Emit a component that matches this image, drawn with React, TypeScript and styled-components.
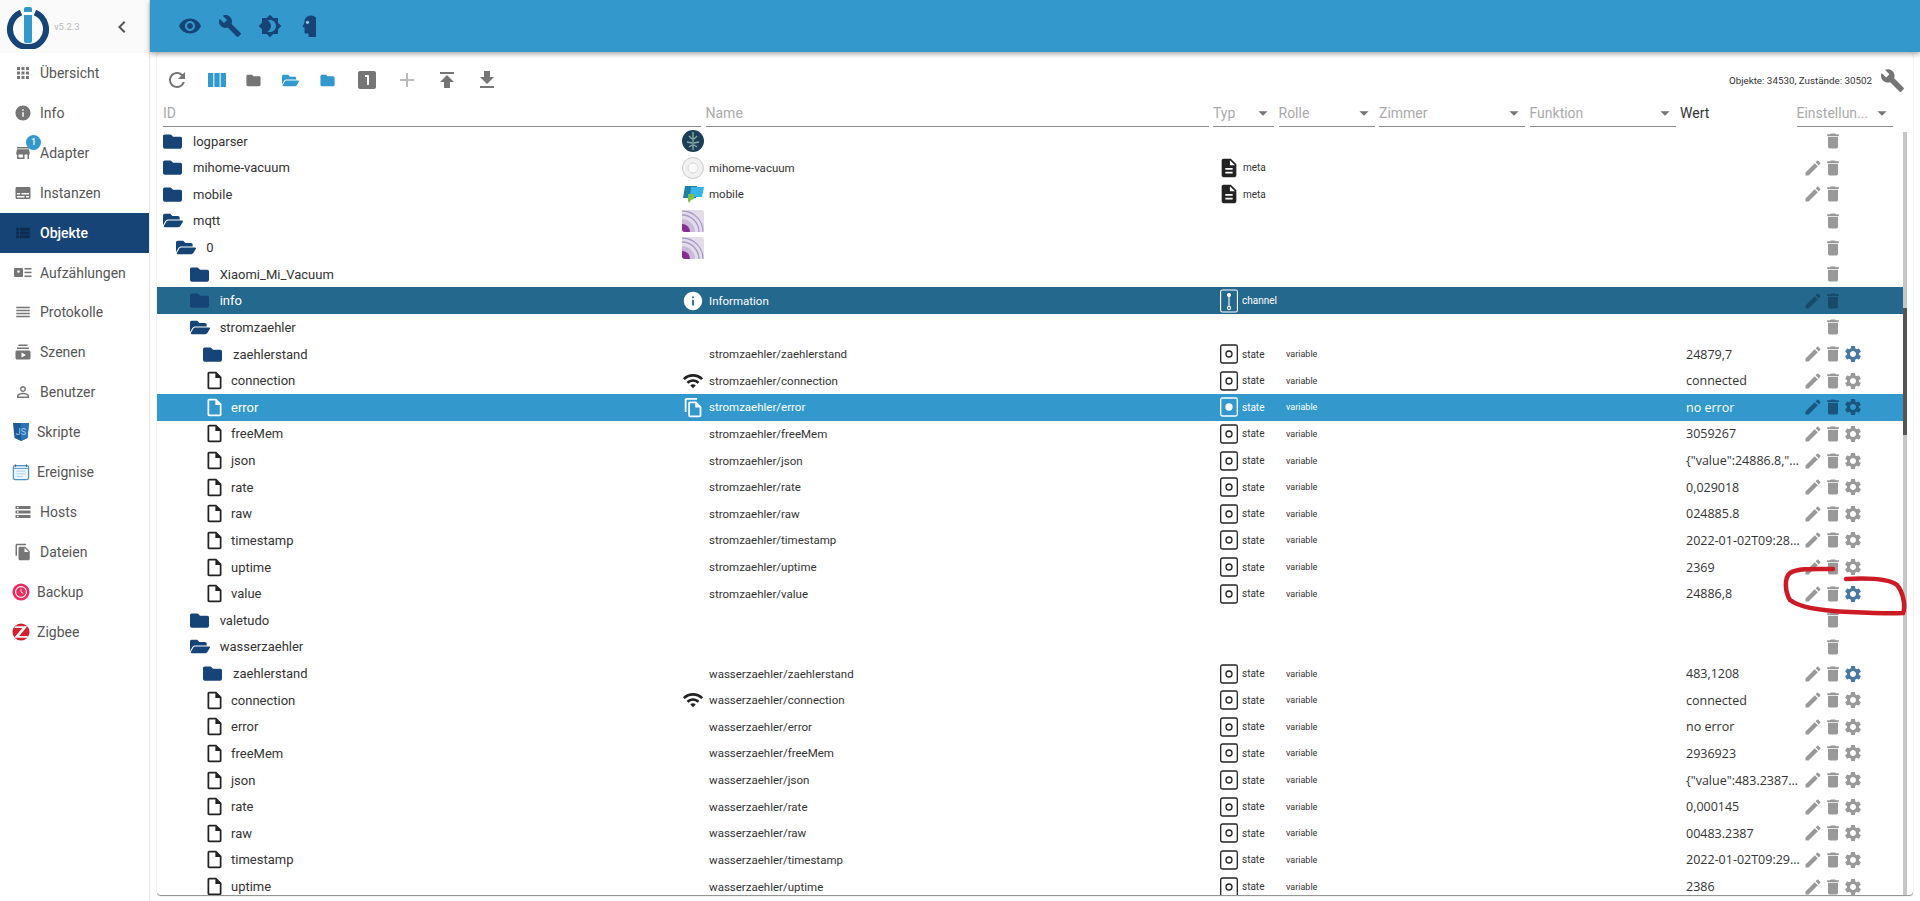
import React from "react";
import styled, { createGlobalStyle } from "styled-components";
import {
  MdApps, MdInfo, MdStore, MdSubtitles, MdViewList, MdReorder, MdSubscriptions, MdPersonOutline,
  MdStorage, MdFileCopy, MdVisibility, MdBuild, MdBrightness4, MdRefresh, MdViewColumn, MdFolder,
  MdLooksOne, MdAdd, MdPublish, MdGetApp, MdChevronLeft, MdArrowDropDown, MdEdit, MdDelete, MdSettings,
  MdDescription, MdWifi, MdOutlineInsertDriveFile, MdOutlineFileCopy,
} from "react-icons/md";
import { FaFolder, FaFolderOpen } from "react-icons/fa";

const Global = createGlobalStyle`
  html, body { margin: 0; padding: 0; height: 100%; overflow: hidden; background: #fff; }
  body { font-family: Roboto, "Liberation Sans", sans-serif; }
`;

const Page = styled.div`display: flex; height: 901px; width: 1920px; overflow: hidden; position: relative;`;
const Side = styled.aside`width: 149px; flex: none; border-right: 1px solid #e4e4e4; background: #fff;`;
const LogoBar = styled.div`height: 53px; display: flex; align-items: center; background: #fafafa; padding-left: 6px; box-sizing: border-box;`;
const Version = styled.span`font-size: 9.5px; color: #bbb; margin-left: 4px; width: 56px;`;
const Collapse = styled.span`color: #555; display: flex; font-size: 24px;`;
const Item = styled.div<{ $on?: boolean; $custom?: boolean }>`
  height: 39.93px; display: flex; align-items: center; position: relative;
  padding-left: ${p => (p.$custom ? 12 : 14)}px;
  background: ${p => (p.$on ? "#164477" : "transparent")};
  color: ${p => (p.$on ? "#fff" : "#555")};
  font-size: 14px; font-weight: ${p => (p.$on ? 500 : 400)};
`;
const ItemIcon = styled.span<{ $on?: boolean; $custom?: boolean }>`
  width: 18px; height: 18px; display: flex; align-items: center; justify-content: center;
  margin-right: ${p => (p.$custom ? 7 : 8)}px; color: ${p => (p.$on ? "#0c2c52" : "#757575")}; font-size: 20px;
`;
const Badge = styled.span`
  position: absolute; left: 26px; top: 2px; width: 15px; height: 15px; border-radius: 50%;
  background: #3399cc; color: #fff; font-size: 9px; font-weight: 500; display: flex; align-items: center; justify-content: center;
`;
const Main = styled.main`flex: 1; min-width: 0; display: flex; flex-direction: column; position: relative;`;
const Top = styled.header`
  height: 52px; flex: none; background: #3399cc; display: flex; align-items: center; padding-left: 28px;
  box-shadow: 0 2px 5px rgba(0,0,0,.35); z-index: 2; color: #164477; gap: 16px;
`;
const TopBtn = styled.span`width: 24px; height: 24px; font-size: 24px; display: flex;`;
const Panel = styled.section`
  flex: 1; min-height: 0; margin: 0 7px 6px 7px; background: #fff; border-radius: 4px;
  box-shadow: 0 1px 1px rgba(0,0,0,.45), 0 0 1px rgba(0,0,0,.14);
  display: flex; flex-direction: column; overflow: hidden;
`;
const Tools = styled.div`height: 48px; flex: none; display: flex; align-items: center; padding: 8px 8px 0 8px; box-sizing: border-box;`;
const Tool = styled.span<{ $c?: string; $ml?: number }>`
  width: 24px; height: 24px; font-size: 24px; display: flex; color: ${p => p.$c || "#757575"}; margin-left: ${p => p.$ml ?? 0}px;
`;
const ToolSmall = styled(Tool)`font-size: 17px; align-items: center; justify-content: center;`;
const Stats = styled.span`margin-left: auto; font-size: 9.8px; color: #333; white-space: nowrap;`;
const StatsWrench = styled.span`font-size: 25px; color: #757575; display: flex; margin-left: 8px;`;
const Filters = styled.div`
  height: 27px; flex: none; display: grid; padding-left: 6px; column-gap: 4.5px; box-sizing: border-box;
  grid-template-columns: 538px 503px 61px 96px 146px 146px 112px 96px;
`;
const Filter = styled.div<{ $plain?: boolean }>`
  display: flex; align-items: center; justify-content: space-between; font-size: 14px; box-sizing: border-box;
  color: ${p => (p.$plain ? "#333" : "#aaa")}; border-bottom: ${p => (p.$plain ? "0" : "1px solid #8c8c8c")};
  padding-bottom: ${p => (p.$plain ? 2 : 0)}px;
  svg { color: #757575; font-size: 22px; flex: none; }
`;
const Body = styled.div`flex: 1; min-height: 0; display: flex; position: relative;`;
const Rows = styled.div`flex: 1; min-width: 0; overflow: hidden; padding-top: 0.7px;`;
const Track = styled.div`width: 4px; flex: none; background: #c6c6c6; margin: 5px 6px 0 0; position: relative;`;
const Thumb = styled.div`position: absolute; left: 0; top: 176px; width: 4px; height: 127px; background: #555;`;
const Row = styled.div<{ $sel?: "hover" | "on" }>`
  height: 26.64px; display: grid; align-items: center; padding-left: 6px;
  grid-template-columns: 519px 531px 73px 400px 119px 1fr; box-sizing: border-box;
  background: ${p => (p.$sel === "on" ? "#3399cc" : p.$sel === "hover" ? "#25688d" : "transparent")};
  color: ${p => (p.$sel ? "#fff" : "#333")};
`;
const IdCell = styled.div<{ $depth: number; $file?: boolean }>`
  display: flex; align-items: center; font-size: 13px; padding-left: ${p => p.$depth * 13.33 + (p.$file ? 3 : 0)}px;
`;
const FolderIcon = styled.span<{ $open?: boolean }>`
  width: 20px; margin-right: 10px; font-size: 20px; color: #164477; display: flex;
  svg { width: ${p => (p.$open ? 21 : 19)}px; height: 19px; }
`;
const FileIcon = styled.span<{ $sel?: boolean }>`
  width: 18px; margin-right: 6px; margin-left: 1px; display: flex; font-size: 19px; color: ${p => (p.$sel ? "#fff" : "#222")};
  svg { margin-left: -3px; width: 21px; height: 21px; }
`;
const NameCell = styled.div`display: flex; align-items: center; font-size: 11.5px;`;
const NameIcon = styled.span`width: 22px; height: 22px; margin-right: 5px; flex: none; display: flex; align-items: center; justify-content: center;`;
const TypeCell = styled.div`display: flex; align-items: center; font-size: 10px; padding-left: 7px; gap: 4px;`;
const RoleCell = styled.div`font-size: 9px;`;
const ValueCell = styled.div`font-size: 12.5px; font-family: "Open Sans", Roboto, sans-serif; white-space: nowrap; overflow: hidden; text-overflow: ellipsis; width: 115px;`;
const Actions = styled.div`display: flex; align-items: center; height: 20px; margin-left: -2.5px;`;
const Act = styled.span<{ $c: string; $hide?: boolean }>`
  display: flex; font-size: 20px; width: 20px; justify-content: center; color: ${p => p.$c}; visibility: ${p => (p.$hide ? "hidden" : "visible")};
`;
const Mark = styled.svg`position: absolute; left: 0; top: 0; pointer-events: none; z-index: 5;`;

const Logo = () => (
  <svg width="44" height="44" viewBox="0 0 44 44" style={{ flex: "none" }}>
    <path d="M15 7.500 A18 18 0 1 0 29 7.500" fill="none" stroke="#164477" strokeWidth="6" />
    <rect x="18" y="2" width="8" height="36" rx="2" fill="#3399cc" />
    <rect x="18" y="7" width="8" height="3" fill="#fff" />
  </svg>
);
const Shield = () => (
  <svg width="18" height="20" viewBox="0 0 18 20"><path d="M1 1h16l-1.500 15L9 19l-6.500-3z" fill="#1d5a96" /><path d="M9 1h8l-1.500 15L9 19z" fill="#2a75b8" /><text x="9" y="13" textAnchor="middle" fontSize="9" fill="#9cc8e8" fontFamily="Roboto">JS</text></svg>
);
const Calendar = () => (
  <svg width="20" height="20" viewBox="0 0 20 20"><rect x="1.500" y="3" width="17" height="15.500" rx="2" fill="#eaf4fb" stroke="#4a90c4" strokeWidth="1.300" /><path d="M1.500 6h17" stroke="#4a90c4" /><path d="M4 1.500v3M16 1.500v3" stroke="#555" /><path d="M5 9h10M5 12h10M5 15h7" stroke="#a9cde6" /></svg>
);
const BackupIc = () => (
  <svg width="20" height="20" viewBox="0 0 20 20"><circle cx="10" cy="10" r="9.500" fill="#ea2b5f" /><circle cx="10" cy="10" r="6" fill="none" stroke="#fff" strokeWidth="1.200" /><path d="M10 6.500V10l2.500 1.500" stroke="#fff" fill="none" /></svg>
);
const ZigbeeIc = () => (
  <svg width="20" height="20" viewBox="0 0 20 20"><circle cx="10" cy="10" r="9.500" fill="#d5202f" /><path d="M3 3.500h14L8 14.500h9.500v2H2.500L11.500 5.500H3z" fill="#fff" /></svg>
);
const EnumIc = () => (
  <svg width="18" height="18" viewBox="0 0 18 18" fill="#757575"><rect x="0" y="4" width="9" height="9" rx="1" /><rect x="10.500" y="4" width="7" height="1.500" /><rect x="10.500" y="7.700" width="7" height="1.500" /><rect x="10.500" y="11.500" width="7" height="1.500" /><circle cx="4.500" cy="7.500" r="1.200" fill="#fff" /></svg>
);
const Head = () => (
  <svg width="24" height="24" viewBox="0 0 24 24" fill="#164477"><path d="M13 1.500c-3.500 0-6.500 2.500-6.500 6 0 1-.2 1.700-.7 2.500L4.600 12.300c-.2.500.1.900.7.900h1.200V18c0 1 .8 1.500 1.500 1.500h2.500v3.500H18V3.500C16.500 2.200 15 1.500 13 1.500z" /><circle cx="9.500" cy="8.300" r="1.600" fill="#8fc7e3" /></svg>
);
const StateIc = ({ on }: { on?: boolean }) => (
  <svg width="18" height="22" viewBox="0 0 18 22" fill="none" stroke={on ? "#fff" : "#222"} strokeWidth="1.300">
    <rect x="0.700" y="2" width="16.600" height="18" rx="1.800" />
    <circle cx="9" cy="11" r="3" fill={on ? "#fff" : "none"} />
  </svg>
);
const ChannelIc = () => (
  <svg width="18" height="24" viewBox="0 0 18 24" fill="none" stroke="#fff" strokeWidth="1.100">
    <rect x="0.600" y="1" width="16.800" height="22" rx="1.800" />
    <circle cx="9" cy="6" r="1.500" fill="#fff" /><path d="M9 7v10" /><circle cx="9" cy="19" r="1.600" />
  </svg>
);
const AdapterIc = ({ kind }: { kind: string }) => {
  if (kind === "log")
    return <svg width="22" height="22" viewBox="0 0 22 22"><circle cx="11" cy="11" r="11" fill="#1c3f57" /><path d="M11 2v18M7 6l3 3M15 6l-3 3M5 12l5 1M17 12l-5 1M7 17l3-2M15 17l-3-2" stroke="#8aa" strokeWidth="1.400" /></svg>;
  if (kind === "vac")
    return <svg width="22" height="22" viewBox="0 0 22 22"><circle cx="11" cy="11" r="10.500" fill="#f1f1f1" stroke="#ccc" /><circle cx="11" cy="11" r="5" fill="#fafafa" stroke="#d8d8d8" /></svg>;
  if (kind === "mob")
    return <svg width="22" height="22" viewBox="0 0 22 22"><path d="M3 3h12l-1 12H1z" fill="#1f7fa8" /><path d="M9 4h13l-2 10H8z" fill="#35b5e5" /><path d="M6 11h6v5l-3 1-2 3-1-2z" fill="#7cc04b" /></svg>;
  return (
    <svg width="22" height="22" viewBox="0 0 22 22"><rect width="22" height="22" rx="3" fill="#e3dcea" />
      <g fill="none" stroke="#a89bc4" strokeWidth="1.300"><path d="M0 5a17 17 0 0 1 17 17" /><path d="M0 1a21 21 0 0 1 21 21" /></g>
      <path d="M0 9a13 13 0 0 1 13 13H3a3 3 0 0 1-3-3z" fill="#cbb9dc" /><path d="M0 14a8 8 0 0 1 8 8H3a3 3 0 0 1-3-3z" fill="#862c8f" /></svg>
  );
};

const nav: [string, React.ReactNode, boolean?][] = [
  ["Übersicht", <MdApps />], ["Info", <MdInfo />], ["Adapter", <MdStore />], ["Instanzen", <MdSubtitles />],
  ["Objekte", <MdViewList />], ["Aufzählungen", <EnumIc />], ["Protokolle", <MdReorder />], ["Szenen", <MdSubscriptions />],
  ["Benutzer", <MdPersonOutline />], ["Skripte", <Shield />, true], ["Ereignise", <Calendar />, true], ["Hosts", <MdStorage />],
  ["Dateien", <MdFileCopy />], ["Backup", <BackupIc />, true], ["Zigbee", <ZigbeeIc />, true],
];

type R = {
  id: string; depth: number; kind: "f" | "o" | "d"; name?: string; icon?: string; type?: string; role?: string;
  val?: string; sel?: "hover" | "on"; pen?: boolean; gear?: "" | "blue";
};
const states = (p: string, vals: string[], gears: boolean[] = []): R[] =>
  ["connection", "error", "freeMem", "json", "rate", "raw", "timestamp", "uptime", "value"].slice(0, vals.length).map((n, i) => ({
    id: n, depth: 3, kind: "d", name: `${p}/${n}`, icon: n === "connection" ? "wifi" : undefined, type: "state", role: "variable",
    val: vals[i], pen: true, gear: gears[i] ? "blue" : "",
  }));
const strom = states("stromzaehler", ["connected", "no error", "3059267", '{"value":24886.8,"unit":"m3"}', "0,029018", "024885.8", "2022-01-02T09:28:11.123", "2369", "24886,8"], [false, true, false, false, false, false, false, false, true]);
strom[1].sel = "on"; strom[1].icon = "copy";
const wasser = states("wasserzaehler", ["connected", "no error", "2936923", '{"value":483.2387,"unit":"m3"}', "0,000145", "00483.2387", "2022-01-02T09:29:11.123", "2386"]);
const rows: R[] = [
  { id: "logparser", depth: 0, kind: "f", icon: "log" },
  { id: "mihome-vacuum", depth: 0, kind: "f", name: "mihome-vacuum", icon: "vac", type: "meta", pen: true },
  { id: "mobile", depth: 0, kind: "f", name: "mobile", icon: "mob", type: "meta", pen: true },
  { id: "mqtt", depth: 0, kind: "o", icon: "mqtt" },
  { id: "0", depth: 1, kind: "o", icon: "mqtt" },
  { id: "Xiaomi_Mi_Vacuum", depth: 2, kind: "f" },
  { id: "info", depth: 2, kind: "f", name: "Information", icon: "info", type: "channel", pen: true, sel: "hover" },
  { id: "stromzaehler", depth: 2, kind: "o" },
  { id: "zaehlerstand", depth: 3, kind: "f", name: "stromzaehler/zaehlerstand", type: "state", role: "variable", val: "24879,7", pen: true, gear: "blue" },
  ...strom,
  { id: "valetudo", depth: 2, kind: "f" },
  { id: "wasserzaehler", depth: 2, kind: "o" },
  { id: "zaehlerstand", depth: 3, kind: "f", name: "wasserzaehler/zaehlerstand", type: "state", role: "variable", val: "483,1208", pen: true, gear: "blue" },
  ...wasser,
];

const NameGlyph = ({ icon }: { icon?: string }) => {
  if (!icon) return null;
  if (icon === "wifi") return <MdWifi size={24} color="#222" />;
  if (icon === "copy") return <MdOutlineFileCopy size={21} color="#fff" />;
  if (icon === "info") return <MdInfo size={24} color="#fff" />;
  return <AdapterIc kind={icon} />;
};

const RowView = ({ r }: { r: R }) => {
  const gearColor = r.sel === "on" ? "#1a5580" : r.gear === "blue" ? "#4a78a4" : "#999";
  const base = r.sel ? (r.sel === "on" ? "#1a5580" : "#174a6b") : "#999";
  return (
    <Row $sel={r.sel}>
      <IdCell $depth={r.depth} $file={r.kind === "d"}>
        {r.kind === "d" ? (
          <FileIcon $sel={!!r.sel}><MdOutlineInsertDriveFile /></FileIcon>
        ) : (
          <FolderIcon $open={r.kind === "o"}>{r.kind === "o" ? <FaFolderOpen /> : <FaFolder />}</FolderIcon>
        )}
        {r.id}
      </IdCell>
      <NameCell><NameIcon><NameGlyph icon={r.icon} /></NameIcon>{r.name}</NameCell>
      <TypeCell>
        {r.type === "state" && <StateIc on={r.sel === "on"} />}
        {r.type === "meta" && <MdDescription size={22} color="#222" style={{ marginLeft: -2, marginRight: -1 }} />}
        {r.type === "channel" && <ChannelIc />}
        {r.type}
      </TypeCell>
      <RoleCell>{r.role}</RoleCell>
      <ValueCell>{r.val}</ValueCell>
      <Actions>
        <Act $c={base} $hide={!r.pen}><MdEdit /></Act>
        <Act $c={base}><MdDelete /></Act>
        <Act $c={gearColor} $hide={!r.role}><MdSettings /></Act>
      </Actions>
    </Row>
  );
};

export default function App() {
  return (
    <Page>
      <Global />
      <Side>
        <LogoBar><Logo /><Version>v5.2.3</Version><Collapse><MdChevronLeft /></Collapse></LogoBar>
        {nav.map(([label, ic, custom]) => (
          <Item key={label} $on={label === "Objekte"} $custom={custom}>
            <ItemIcon $on={label === "Objekte"} $custom={custom}>{ic}</ItemIcon>
            {label}
            {label === "Adapter" && <Badge>1</Badge>}
          </Item>
        ))}
      </Side>
      <Main>
        <Top>
          <TopBtn><MdVisibility /></TopBtn>
          <TopBtn><MdBuild /></TopBtn>
          <TopBtn><MdBrightness4 /></TopBtn>
          <TopBtn><Head /></TopBtn>
        </Top>
        <Panel>
          <Tools>
            <Tool><MdRefresh /></Tool>
            <Tool $c="#3399cc" $ml={16}><MdViewColumn /></Tool>
            <ToolSmall $ml={12}><MdFolder /></ToolSmall>
            <ToolSmall $c="#3399cc" $ml={13}><FaFolderOpen /></ToolSmall>
            <ToolSmall $c="#3399cc" $ml={13}><MdFolder /></ToolSmall>
            <Tool $ml={16}><MdLooksOne /></Tool>
            <Tool $c="#bbb" $ml={16}><MdAdd /></Tool>
            <Tool $ml={16}><MdPublish /></Tool>
            <Tool $ml={16}><MdGetApp /></Tool>
            <Stats>Objekte: 34530, Zustände: 30502</Stats>
            <StatsWrench><MdBuild /></StatsWrench>
          </Tools>
          <Filters>
            <Filter>ID</Filter>
            <Filter>Name</Filter>
            <Filter>Typ<MdArrowDropDown /></Filter>
            <Filter>Rolle<MdArrowDropDown /></Filter>
            <Filter>Zimmer<MdArrowDropDown /></Filter>
            <Filter>Funktion<MdArrowDropDown /></Filter>
            <Filter $plain>Wert</Filter>
            <Filter>Einstellun...<MdArrowDropDown /></Filter>
          </Filters>
          <Body>
            <Rows>{rows.map((r, i) => <RowView key={i} r={r} />)}</Rows>
            <Track><Thumb /></Track>
          </Body>
        </Panel>
      </Main>
      <Mark width="1920" height="901" viewBox="0 0 1920 901" fill="none">
        <path d="M1833 569 C1815 569 1798 568 1790 573 C1784 578 1785 592 1790 600 C1800 608 1825 611 1850 612 C1870 613 1890 614 1903 613 C1906 606 1903 592 1897 585 C1888 578 1865 578 1846 579" stroke="#cc1b24" strokeWidth="4.500" strokeLinecap="round" />
      </Mark>
    </Page>
  );
}
